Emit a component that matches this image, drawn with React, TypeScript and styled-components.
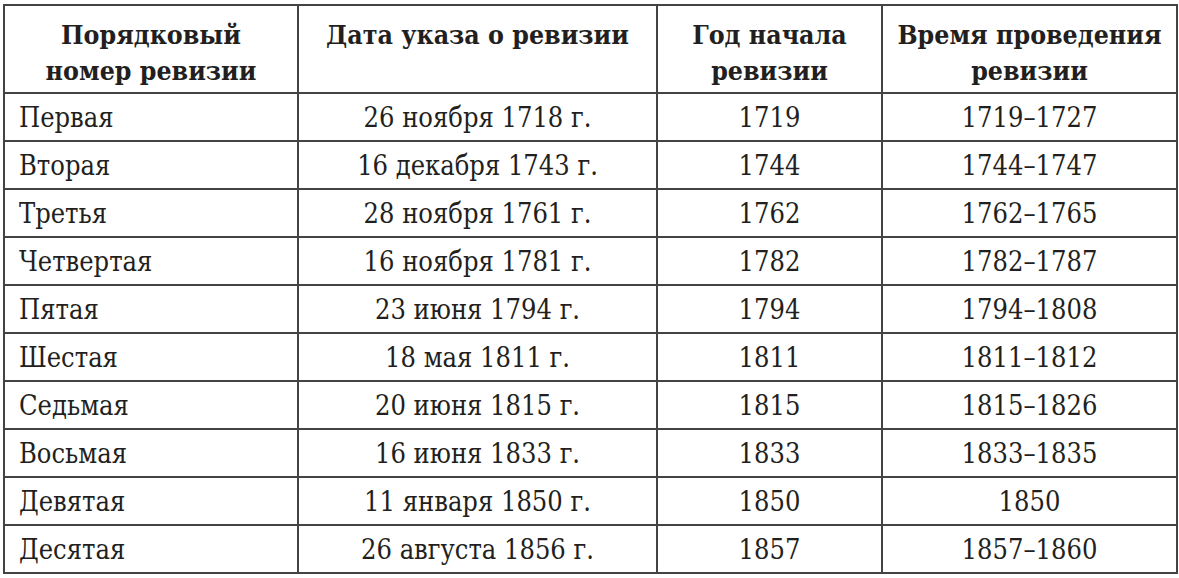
import React from "react";
import styled, { createGlobalStyle } from "styled-components";

const Global = createGlobalStyle`
  html, body { margin: 0; padding: 0; background: #ffffff; }
  body { font-family: "DejaVu Serif Condensed", "DejaVu Serif", serif; color: #231f20; }
`;

const Page = styled.div`
  padding: 4px 0 0 3px;
`;

const Table = styled.table`
  border-collapse: collapse;
  table-layout: fixed;
  width: 1173px;
  font-family: "DejaVu Serif Condensed", "DejaVu Serif", serif;
  color: #231f20;
`;

const HeadCell = styled.th`
  border: 2px solid #434343;
  height: 75px;
  padding: 11px 2px 0;
  vertical-align: top;
  text-align: center;
  font-weight: 700;
  font-size: 26.5px;
  line-height: 36px;
`;

const Cell = styled.td<{ $left?: boolean }>`
  border: 2px solid #434343;
  height: 44px;
  padding: ${(p) => (p.$left ? "2px 0 0 14px" : "2px 0 0")};
  text-align: ${(p) => (p.$left ? "left" : "center")};
  vertical-align: middle;
  font-size: 27px;
  line-height: 30px;
`;

const rows: [string, string, string, string][] = [
  ["Первая", "26 ноября 1718 г.", "1719", "1719–1727"],
  ["Вторая", "16 декабря 1743 г.", "1744", "1744–1747"],
  ["Третья", "28 ноября 1761 г.", "1762", "1762–1765"],
  ["Четвертая", "16 ноября 1781 г.", "1782", "1782–1787"],
  ["Пятая", "23 июня 1794 г.", "1794", "1794–1808"],
  ["Шестая", "18 мая 1811 г.", "1811", "1811–1812"],
  ["Седьмая", "20 июня 1815 г.", "1815", "1815–1826"],
  ["Восьмая", "16 июня 1833 г.", "1833", "1833–1835"],
  ["Девятая", "11 января 1850 г.", "1850", "1850"],
  ["Десятая", "26 августа 1856 г.", "1857", "1857–1860"],
];

export default function App() {
  return (
    <Page>
      <Global />
      <Table>
        <colgroup>
          <col style={{ width: 294 }} />
          <col style={{ width: 359 }} />
          <col style={{ width: 225 }} />
          <col style={{ width: 295 }} />
        </colgroup>
        <thead>
          <tr>
            <HeadCell>
              Порядковый
              <br />
              номер ревизии
            </HeadCell>
            <HeadCell>Дата указа о ревизии</HeadCell>
            <HeadCell>
              Год начала
              <br />
              ревизии
            </HeadCell>
            <HeadCell>
              Время проведения
              <br />
              ревизии
            </HeadCell>
          </tr>
        </thead>
        <tbody>
          {rows.map((r) => (
            <tr key={r[0]}>
              <Cell $left>{r[0]}</Cell>
              <Cell>{r[1]}</Cell>
              <Cell>{r[2]}</Cell>
              <Cell>{r[3]}</Cell>
            </tr>
          ))}
        </tbody>
      </Table>
    </Page>
  );
}
